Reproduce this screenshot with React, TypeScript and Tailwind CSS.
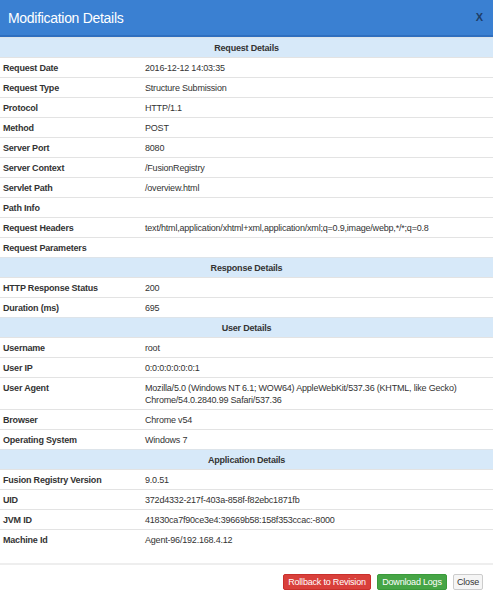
import React from "react";

type Row = { label: string; value?: string[] } | { section: string };

const rows: Row[] = [
  { section: "Request Details" },
  { label: "Request Date", value: ["2016-12-12 14:03:35"] },
  { label: "Request Type", value: ["Structure Submission"] },
  { label: "Protocol", value: ["HTTP/1.1"] },
  { label: "Method", value: ["POST"] },
  { label: "Server Port", value: ["8080"] },
  { label: "Server Context", value: ["/FusionRegistry"] },
  { label: "Servlet Path", value: ["/overview.html"] },
  { label: "Path Info" },
  {
    label: "Request Headers",
    value: ["text/html,application/xhtml+xml,application/xml;q=0.9,image/webp,*/*;q=0.8"],
  },
  { label: "Request Parameters" },
  { section: "Response Details" },
  { label: "HTTP Response Status", value: ["200"] },
  { label: "Duration (ms)", value: ["695"] },
  { section: "User Details" },
  { label: "Username", value: ["root"] },
  { label: "User IP", value: ["0:0:0:0:0:0:0:1"] },
  {
    label: "User Agent",
    value: [
      "Mozilla/5.0 (Windows NT 6.1; WOW64) AppleWebKit/537.36 (KHTML, like Gecko)",
      "Chrome/54.0.2840.99 Safari/537.36",
    ],
  },
  { label: "Browser", value: ["Chrome v54"] },
  { label: "Operating System", value: ["Windows 7"] },
  { section: "Application Details" },
  { label: "Fusion Registry Version", value: ["9.0.51"] },
  { label: "UID", value: ["372d4332-217f-403a-858f-f82ebc1871fb"] },
  { label: "JVM ID", value: ["41830ca7f90ce3e4:39669b58:158f353ccac:-8000"] },
  { label: "Machine Id", value: ["Agent-96/192.168.4.12"] },
];

export default function App() {
  return (
    <div className="flex h-[599px] w-[493px] flex-col overflow-hidden bg-white font-['Liberation_Sans',Arial,sans-serif] text-[9px] tracking-[-0.2px] text-[#333]">
      <div className="flex h-[37px] shrink-0 items-center justify-between border-b-2 border-[#2f6fbf] bg-[#3a80d2] pl-[8px] pr-[10px] text-white">
        <span className="text-[14px] leading-none tracking-[-0.3px]">Modification Details</span>
        <span className="text-[11px] font-bold text-[#1e3d66]">X</span>
      </div>
      <div className="flex flex-col">
        {rows.map((r, i) =>
          "section" in r ? (
            <div
              key={i}
              className="h-[20px] border-t border-[#dde4ea] bg-[#d7e9f9] text-center font-bold leading-[20px]"
            >
              {r.section}
            </div>
          ) : (
            <div key={i} className="grid grid-cols-[142px_1fr] border-t border-[#e3e3e3] pl-[3px] pt-[4px] pb-[3px] leading-[12px]">
              <span className="font-bold">{r.label}</span>
              <div className="flex min-h-[12px] flex-col whitespace-nowrap">
                {(r.value ?? []).map((v) => (
                  <span key={v}>{v}</span>
                ))}
              </div>
            </div>
          )
        )}
      </div>
      <div className="mt-[14px] flex justify-end gap-[6px] border-t-2 border-[#eeeeee] pr-[10px] pt-[9px]">
        <button className="h-[16px] w-[88px] whitespace-nowrap rounded-[2px] border border-[#c9302c] bg-[#d9403b] px-0 text-[9px] leading-[14px] text-white">
          Rollback to Revision
        </button>
        <button className="h-[16px] w-[70px] whitespace-nowrap rounded-[2px] border border-[#3a9a3a] bg-[#46a546] px-0 text-[9px] leading-[14px] text-white">
          Download Logs
        </button>
        <button className="h-[16px] w-[30px] whitespace-nowrap rounded-[2px] border border-[#cccccc] bg-[#f5f5f5] px-0 text-[9px] leading-[14px] text-[#333]">
          Close
        </button>
      </div>
    </div>
  );
}
